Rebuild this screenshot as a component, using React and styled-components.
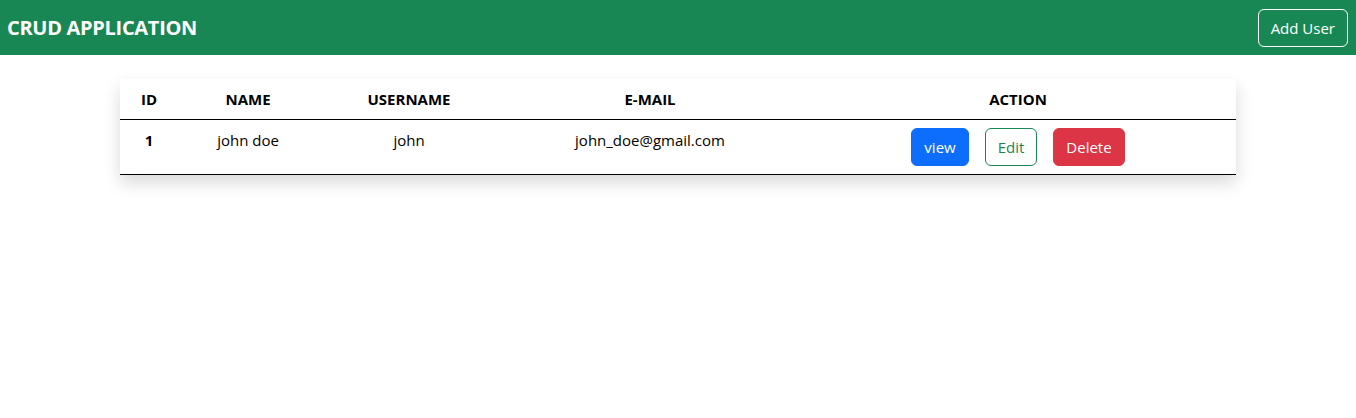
import React from "react";
import styled, { createGlobalStyle } from "styled-components";

const GlobalStyle = createGlobalStyle`
  body {
    margin: 0;
    font-family: "Open Sans", "Noto Sans", sans-serif;
    font-size: 16px;
    line-height: 1.5;
    color: #212529;
    background: #fff;
  }
`;

const NavBar = styled.header`
  display: flex;
  align-items: center;
  justify-content: space-between;
  background: #198754;
  height: 55px;
  padding: 0 8px 0 7px;
  box-sizing: border-box;
`;

const Brand = styled.div`
  color: #fff;
  font-weight: 700;
  font-size: 20px;
  letter-spacing: -0.3px;
`;

const Button = styled.button`
  font-family: inherit;
  font-size: 15px;
  line-height: 24px;
  padding: 6px 12px;
  margin: 0 8px;
  border-radius: 6px;
  border: 1px solid ${(p) => p.border || p.bg};
  background: ${(p) => p.bg || "transparent"};
  color: ${(p) => p.color};
  cursor: pointer;
`;

const AddButton = styled(Button)`
  margin: 0;
`;

const Main = styled.main`
  padding: 24px 120px;
`;

const Table = styled.table`
  width: 100%;
  border-collapse: collapse;
  background: #fff;
  box-shadow: 0 8px 16px rgba(0, 0, 0, 0.15);
  color: #000;
`;

const Th = styled.th`
  padding: 8px;
  font-weight: 700;
  font-size: 15px;
  line-height: 24px;
  text-align: center;
  border-bottom: 1px solid #000;
`;

const Td = styled.td`
  padding: 8px;
  font-size: 15px;
  line-height: 24px;
  text-align: center;
  vertical-align: top;
  font-weight: ${(p) => (p.bold ? 700 : 400)};
  border-bottom: 1px solid #000;
`;

const users = [
  { id: 1, name: "john doe", username: "john", email: "john_doe@gmail.com" },
];

const App = () => {
  return (
    <>
      <GlobalStyle />
      <NavBar>
        <Brand>CRUD APPLICATION</Brand>
        <AddButton border="#fff" color="#fff">
          Add User
        </AddButton>
      </NavBar>
      <Main>
        <Table>
          <colgroup>
            <col style={{ width: 58 }} />
            <col style={{ width: 140 }} />
            <col style={{ width: 182 }} />
            <col style={{ width: 300 }} />
            <col />
          </colgroup>
          <thead>
            <tr>
              <Th>ID</Th>
              <Th>NAME</Th>
              <Th>USERNAME</Th>
              <Th>E-MAIL</Th>
              <Th>ACTION</Th>
            </tr>
          </thead>
          <tbody>
            {users.map((u) => (
              <tr key={u.id}>
                <Td bold>{u.id}</Td>
                <Td>{u.name}</Td>
                <Td>{u.username}</Td>
                <Td>{u.email}</Td>
                <Td>
                  <Button bg="#0d6efd" color="#fff">
                    view
                  </Button>
                  <Button border="#198754" color="#198754">
                    Edit
                  </Button>
                  <Button bg="#dc3545" color="#fff">
                    Delete
                  </Button>
                </Td>
              </tr>
            ))}
          </tbody>
        </Table>
      </Main>
    </>
  );
};

export default App;
